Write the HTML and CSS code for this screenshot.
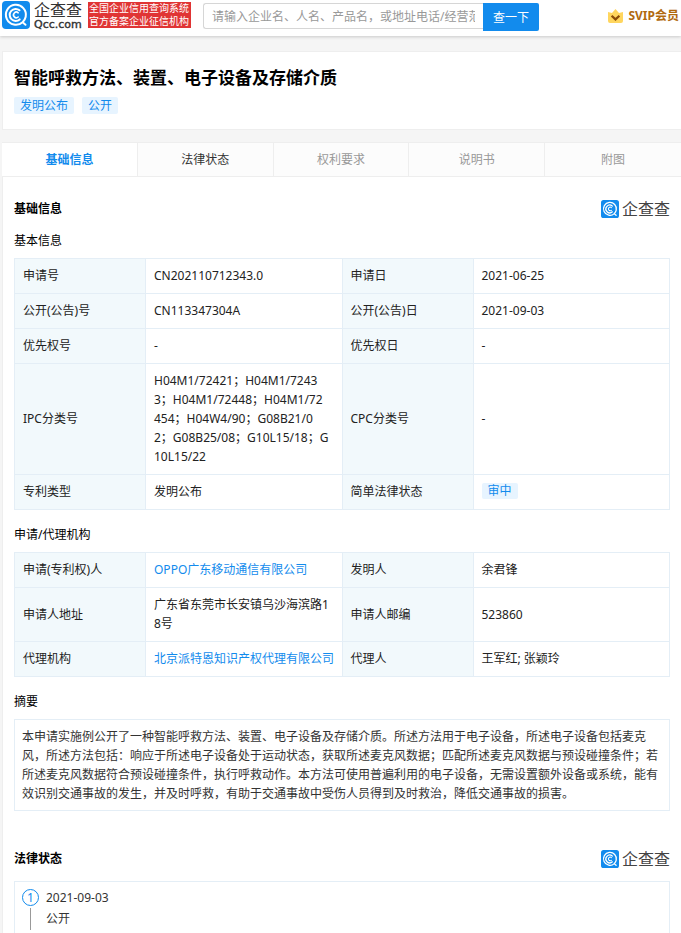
FILE: index.html
```html
<!DOCTYPE html>
<html lang="zh-CN">
<head>
  <meta charset="UTF-8" />
  <meta name="viewport" content="width=device-width, initial-scale=1.0" />
  <title>智能呼救方法、装置、电子设备及存储介质 - 企查查</title>
  <link rel="stylesheet" href="styles.css">
</head>
<body>
  <svg class="sprite" aria-hidden="true">
    <symbol id="qcc" viewBox="0 0 28 28">
      <rect width="28" height="28" rx="4" fill="#128bed"/>
      <g fill="none" stroke="#fff" stroke-linecap="round">
        <path d="M20.6 21.2A10 10 0 1 1 23.7 15.8C23.2 18.5 21.8 20 20.6 21.2L23.5 23.8" stroke-width="2"/>
        <path d="M17.5 9.3A6 6 0 1 0 17.7 18.4" stroke-width="2"/>
        <path d="M16.2 11.8A2.8 2.8 0 1 0 16.2 16" stroke-width="1.6"/>
      </g>
    </symbol>
  </svg>

  <header class="header">
    <a class="logo" href="#">
      <svg class="logo-icon"><use href="#qcc"/></svg>
      <span class="logo-text">
        <span class="logo-name">企查查</span>
        <span class="logo-domain">Qcc.com</span>
      </span>
    </a>
    <div class="slogan">全国企业信用查询系统<br>官方备案企业征信机构</div>
    <form class="search">
      <input type="text" class="search-input" aria-label="搜索" placeholder="请输入企业名、人名、产品名，或地址电话/经营范围等" />
      <button type="button" class="search-btn">查一下</button>
    </form>
    <a class="svip" href="#">
      <svg class="crown" viewBox="0 0 15 14">
        <path d="M0 3 L4 4 L7.5 0 L11 4 L15 3 V12 Q15 14 13 14 H2 Q0 14 0 12 Z" fill="#ffd65e"/>
        <path d="M3.6 6.8 L7.5 10.4 L11.4 6.8" fill="none" stroke="#8a4b08" stroke-width="2.2"/>
      </svg>
      <span>SVIP会员</span>
    </a>
  </header>

  <main class="container">
    <section class="card title-card">
      <h1>智能呼救方法、装置、电子设备及存储介质</h1>
      <div class="tags">
        <span class="tag">发明公布</span>
        <span class="tag">公开</span>
      </div>
    </section>

    <nav class="tabs">
      <a class="tab active" href="#base">基础信息</a>
      <a class="tab" href="#law">法律状态</a>
      <a class="tab disabled">权利要求</a>
      <a class="tab disabled">说明书</a>
      <a class="tab disabled">附图</a>
    </nav>

    <div class="content">
      <div class="section-head" id="base">
        <h2>基础信息</h2>
        <div class="watermark"><svg class="mark-icon"><use href="#qcc"/></svg><span>企查查</span></div>
      </div>

      <h3>基本信息</h3>
      <table class="info">
        <tr>
          <th scope="row">申请号</th><td>CN202110712343.0</td>
          <th scope="row">申请日</th><td>2021-06-25</td>
        </tr>
        <tr>
          <th scope="row">公开(公告)号</th><td>CN113347304A</td>
          <th scope="row">公开(公告)日</th><td>2021-09-03</td>
        </tr>
        <tr>
          <th scope="row">优先权号</th><td>-</td>
          <th scope="row">优先权日</th><td>-</td>
        </tr>
        <tr>
          <th scope="row">IPC分类号</th>
          <td>H04M1/72421；H04M1/7243<br>3；H04M1/72448；H04M1/72<br>454；H04W4/90；G08B21/0<br>2；G08B25/08；G10L15/18；G<br>10L15/22</td>
          <th scope="row">CPC分类号</th><td>-</td>
        </tr>
        <tr>
          <th scope="row">专利类型</th><td>发明公布</td>
          <th scope="row">简单法律状态</th><td><span class="tag small">审中</span></td>
        </tr>
      </table>

      <h3>申请/代理机构</h3>
      <table class="info">
        <tr>
          <th scope="row">申请(专利权)人</th><td><a href="#">OPPO广东移动通信有限公司</a></td>
          <th scope="row">发明人</th><td>余君锋</td>
        </tr>
        <tr>
          <th scope="row">申请人地址</th><td>广东省东莞市长安镇乌沙海滨路18号</td>
          <th scope="row">申请人邮编</th><td>523860</td>
        </tr>
        <tr>
          <th scope="row">代理机构</th><td><a href="#">北京派特恩知识产权代理有限公司</a></td>
          <th scope="row">代理人</th><td>王军红; 张颖玲</td>
        </tr>
      </table>

      <h3>摘要</h3>
      <p class="abstract">本申请实施例公开了一种智能呼救方法、装置、电子设备及存储介质。所述方法用于电子设备，所述电子设备包括麦克风，所述方法包括：响应于所述电子设备处于运动状态，获取所述麦克风数据；匹配所述麦克风数据与预设碰撞条件；若所述麦克风数据符合预设碰撞条件，执行呼救动作。本方法可使用普遍利用的电子设备，无需设置额外设备或系统，能有效识别交通事故的发生，并及时呼救，有助于交通事故中受伤人员得到及时救治，降低交通事故的损害。</p>

      <div class="section-head law-head" id="law">
        <h2>法律状态</h2>
        <div class="watermark"><svg class="mark-icon"><use href="#qcc"/></svg><span>企查查</span></div>
      </div>
      <div class="timeline">
        <div class="rail">
          <span class="num">1</span>
          <span class="line"></span>
        </div>
        <div class="event">
          <div class="date">2021-09-03</div>
          <div>公开</div>
        </div>
      </div>
    </div>
  </main>
</body>
</html>
```

FILE: styles.css
```css
* {
  box-sizing: border-box;
  margin: 0;
  padding: 0;
}

body {
  font-family: "Noto Sans", "Noto Sans CJK SC", sans-serif;
  font-size: 12px;
  line-height: 19px;
  color: #222;
  background: #f5f5f5;
}

a {
  color: #128bed;
  text-decoration: none;
}

.sprite {
  display: none;
}

/* header */
.header {
  display: flex;
  align-items: flex-start;
  height: 36px;
  padding: 1px 2px 0;
  background: #fff;
  box-shadow: 0 1px 3px rgba(0, 0, 0, 0.18);
}

.logo {
  display: flex;
  gap: 4px;
  color: #333;
}

.logo-icon {
  width: 28px;
  height: 28px;
}

.logo-text {
  display: flex;
  flex-direction: column;
  width: 48px;
}

.logo-name {
  font-family: "Noto Sans CJK SC", sans-serif;
  font-size: 16px;
  line-height: 17px;
}

.logo-domain {
  font-family: "DejaVu Sans", sans-serif;
  font-size: 11px;
  line-height: 13px;
  -webkit-text-stroke: 0.4px #333;
}

.slogan {
  flex: none;
  margin: 1px 12px 0 6px;
  padding: 0 1px;
  border-right: 1px solid #e03434;
  font-size: 10px;
  line-height: 13px;
  color: #fff;
  background: #e03434;
}

.search {
  display: flex;
  flex: 0 1 336px;
  align-items: flex-start;
  min-width: 0;
  padding-top: 2px;
}

.search-input {
  flex: 1;
  min-width: 0;
  height: 26px;
  padding: 0 8px;
  border: 1px solid #d6d6d6;
  border-right: 0;
  border-radius: 3px 0 0 3px;
  font: inherit;
  outline: none;
}

.search-input::placeholder {
  color: #999;
}

.search-btn {
  flex: none;
  width: 56px;
  height: 28px;
  border: 0;
  border-radius: 0 2px 2px 0;
  font: inherit;
  color: #fff;
  background: #128bed;
  cursor: pointer;
}

.svip {
  display: flex;
  flex: none;
  align-items: center;
  gap: 5px;
  margin-left: auto;
  padding-top: 5px;
  font-weight: bold;
  color: #b0690f;
}

.crown {
  width: 15px;
  height: 14px;
}

/* title */
.container {
  margin-left: 2px;
}

.card {
  border: 1px solid #eee;
  border-right: 0;
  background: #fff;
}

.title-card {
  margin-top: 15px;
  padding: 14px 11px 15px;
}

h1 {
  font-size: 17px;
  line-height: 24px;
  color: #000;
}

.tags {
  display: flex;
  gap: 8px;
  margin-top: 7px;
}

.tag {
  padding: 0 6px;
  border-radius: 2px;
  line-height: 17px;
  color: #128bed;
  background: #e7f4ff;
}

.small {
  display: inline-block;
  line-height: 16px;
  vertical-align: top;
  margin-top: 1px;
}

/* tabs */
.tabs {
  display: grid;
  grid-template-columns: repeat(5, 1fr);
  margin-top: 12px;
  border-top: 1px solid #eee;
  border-bottom: 1px solid #eee;
}

.tab {
  border-right: 1px solid #eee;
  line-height: 33px;
  text-align: center;
  color: #333;
  background: #fcfcfc;
}

.tab:last-child {
  border-right: 0;
}

.tab.active {
  font-weight: bold;
  color: #128bed;
  background: #fff;
}

.tab.disabled {
  color: #999;
}

/* content */
.content {
  padding: 22px 11px 0;
  border-left: 1px solid #eee;
  background: #fff;
}

.section-head {
  display: flex;
  justify-content: space-between;
  align-items: center;
}

h2 {
  font-size: 12px;
  line-height: 20px;
  color: #000;
}

h3 {
  margin: 16px 0 8px;
  font-size: 12px;
  font-weight: normal;
  line-height: 18px;
  color: #000;
}

.section-head + h3 {
  margin-top: 13px;
}

.watermark {
  display: flex;
  align-items: center;
  gap: 3px;
  font-size: 16px;
  line-height: 20px;
  color: #444;
}

.mark-icon {
  width: 18px;
  height: 18px;
}

.info {
  width: 100%;
  table-layout: fixed;
  border-collapse: collapse;
}

.info th,
.info td {
  padding: 7px 7px 8px 8px;
  border: 1px solid #e4eef6;
  text-align: left;
  font-weight: normal;
  word-break: break-all;
}

.info th {
  width: 20%;
  background: #f2f9fc;
}

.info td {
  width: 30%;
}

.abstract {
  padding: 7px;
  border: 1px solid #e4eef6;
  color: #333;
}

.law-head {
  margin-top: 38px;
}

.timeline {
  display: flex;
  gap: 7px;
  margin-top: 12px;
  padding: 7px 7px 3px;
  border: 1px solid #e4eef6;
  border-bottom: 0;
  color: #333;
}

.rail {
  display: flex;
  flex-direction: column;
  align-items: center;
  gap: 2px;
}

.num {
  width: 17px;
  height: 17px;
  border: 1px solid #128bed;
  border-radius: 50%;
  line-height: 15px;
  text-align: center;
  color: #128bed;
}

.line {
  width: 1px;
  height: 22px;
  background: #999;
}

.event {
  line-height: 24px;
}

.date {
  line-height: 18px;
}
```
